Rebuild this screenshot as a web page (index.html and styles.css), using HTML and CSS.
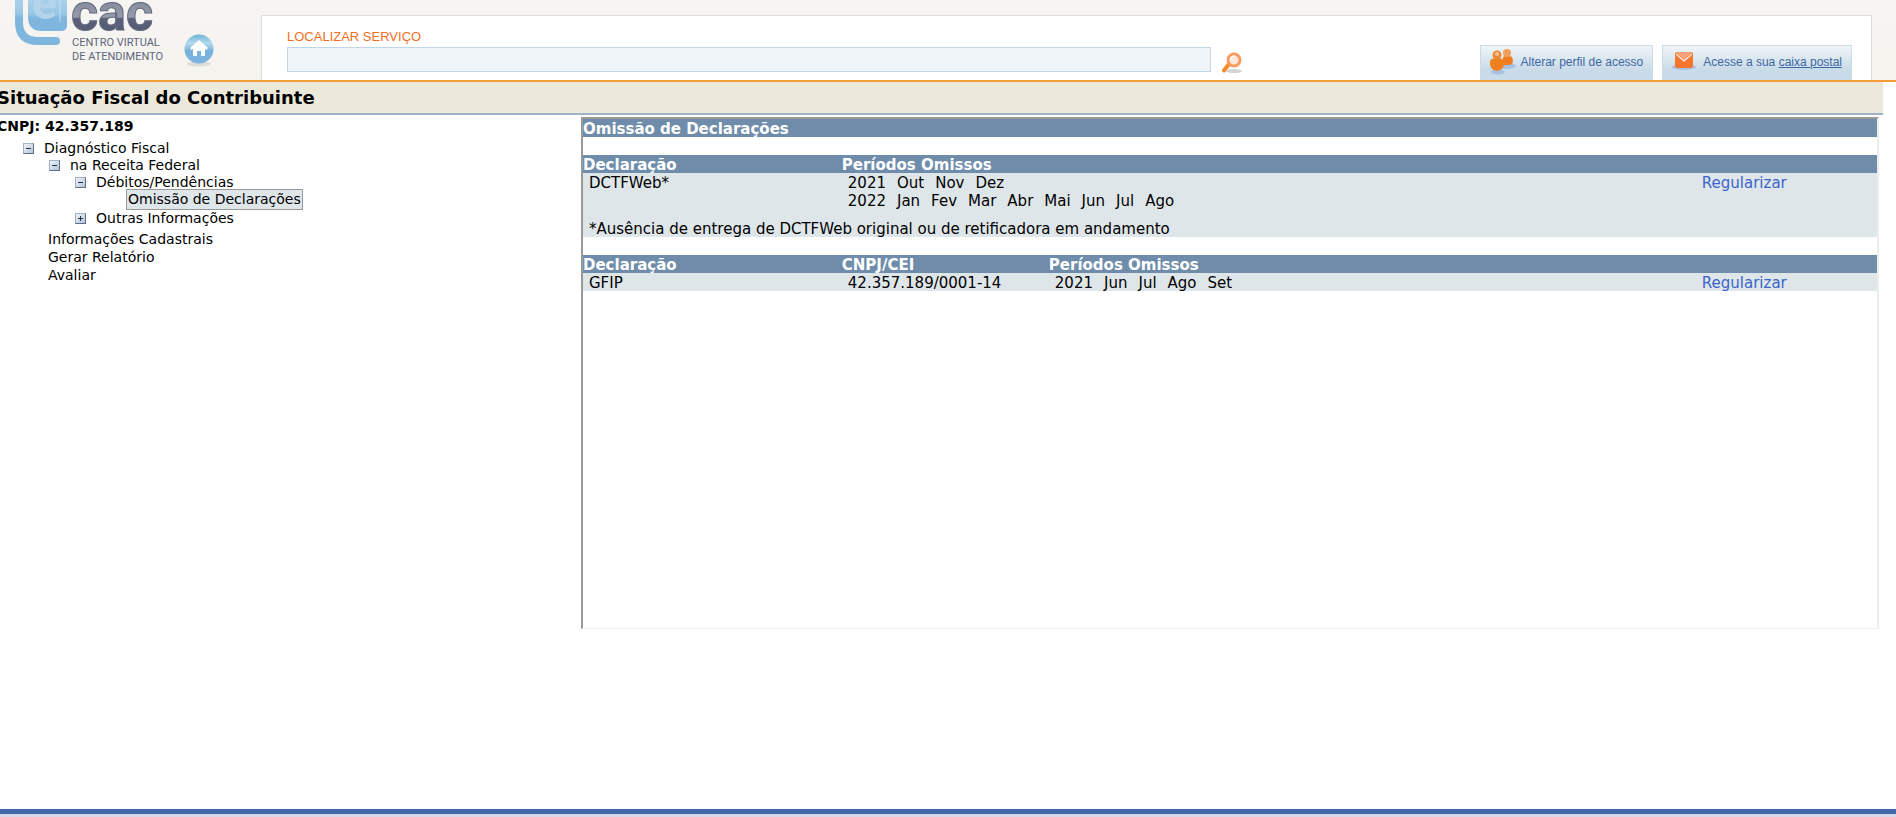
FILE: index.html
```html
<!DOCTYPE html>
<html lang="pt-BR">
<head>
  <meta charset="UTF-8">
  <meta name="viewport" content="width=device-width, initial-scale=1.0">
  <title>e-CAC - Situação Fiscal do Contribuinte</title>
  <link rel="stylesheet" href="styles.css">
</head>
<body>
  <header class="topo">
    <svg class="logo" width="170" height="66" viewBox="0 0 170 66" role="img" aria-label="eCAC">
      <defs>
        <linearGradient id="azul" gradientUnits="userSpaceOnUse" x1="0" y1="0" x2="0" y2="45">
          <stop offset="0" stop-color="#a9d0ea"/>
          <stop offset=".3" stop-color="#9ac7e6"/>
          <stop offset=".4" stop-color="#7fb6de"/>
          <stop offset="1" stop-color="#7fb6de"/>
        </linearGradient>
        <linearGradient id="cinza" gradientUnits="userSpaceOnUse" x1="0" y1="0" x2="0" y2="31">
          <stop offset="0" stop-color="#85899a"/>
          <stop offset=".55" stop-color="#979cab"/>
          <stop offset=".6" stop-color="#5a6178"/>
          <stop offset="1" stop-color="#545b73"/>
        </linearGradient>
      </defs>
      <path d="M19 -4V22Q19 41 38 41H56" fill="none" stroke="url(#azul)" stroke-width="8"/>
      <path d="M56 37Q60 37 60 41Q60 45 56 45Z" fill="#7fb6de"/>
      <path d="M28 -2H67V25Q67 31 61 31H42Q28 31 28 17Z" fill="url(#azul)"/>
      <path d="M60 -2V22" fill="none" stroke="#c3dff0" stroke-width="1"/>
      <text class="logo-e" x="32" y="19">e</text>
      <text class="logo-cac" x="71" y="30">cac</text>
      <text class="logo-nome" x="72" y="46">CENTRO VIRTUAL</text>
      <text class="logo-nome" x="72" y="60">DE ATENDIMENTO</text>
    </svg>
    <a class="inicio" href="#" aria-label="Página inicial">
      <svg width="30" height="33" viewBox="0 0 30 33">
        <defs>
          <linearGradient id="bola" x1="0" y1="0" x2="0" y2="1">
            <stop offset="0" stop-color="#6fb3d8"/>
            <stop offset=".3" stop-color="#b5dbee"/>
            <stop offset=".55" stop-color="#78b3dc"/>
            <stop offset="1" stop-color="#7db5e0"/>
          </linearGradient>
        </defs>
        <ellipse cx="15" cy="30" rx="12" ry="2.5" fill="#dcdcd9"/>
        <circle cx="15" cy="15" r="14.5" fill="url(#bola)"/>
        <path d="M15 6L24 14L22.5 16L21 15V22H17V17H13V22H9V15L7.500 16L6 14Z" fill="#fff"/>
      </svg>
    </a>
    <div class="painel">
      <form class="busca">
        <label for="servico">LOCALIZAR SERVIÇO</label>
        <div class="busca-linha">
          <input type="text" id="servico" name="servico">
          <button type="submit" aria-label="Localizar">
            <svg width="20" height="22" viewBox="0 0 20 22">
              <ellipse cx="12" cy="19" rx="8" ry="2" fill="#d4d4d4"/>
              <path d="M7 12L2 18.500" stroke="#f78a2c" stroke-width="4" stroke-linecap="round"/>
              <circle cx="12" cy="8" r="6" fill="#fde9dc" stroke="#fa9b5e" stroke-width="3"/>
              <path d="M8.500 7Q9.500 4 13 4" fill="none" stroke="#fff" stroke-width="1.500"/>
            </svg>
          </button>
        </div>
      </form>
      <nav class="abas">
        <a href="#">
          <svg width="28" height="26" viewBox="0 0 28 26">
            <ellipse cx="18" cy="17" rx="9" ry="3" fill="#a9c1e1"/>
            <ellipse cx="9" cy="23" rx="7" ry="2.500" fill="#a9c1e1"/>
            <path d="M14 8Q18 5 23 8Q26 15 20 16H14Z" fill="#ee7d24"/>
            <circle cx="18" cy="4" r="4" fill="#f3a05f"/>
            <path d="M1 12Q2 9 8 9Q14 9 15 12Q16 21 8 22Q0 21 1 12Z" fill="#f0801f"/>
            <circle cx="8" cy="6" r="4.500" fill="#ef8733"/>
            <circle cx="8" cy="5" r="2" fill="#f9c39a"/>
          </svg>
          <span>Alterar perfil de acesso</span>
        </a>
        <a href="#">
          <svg width="28" height="26" viewBox="0 0 28 26">
            <ellipse cx="13" cy="18" rx="12" ry="3" fill="#a9c1e1"/>
            <rect x="4" y="3" width="18" height="16" rx="2" fill="#f4752b"/>
            <path d="M5 3H21L13 11Z" fill="#f6a37c"/>
            <path d="M5 5L13 12L21 5" fill="none" stroke="#fde5d8" stroke-width="1.500"/>
          </svg>
          <span>Acesse a sua <u>caixa postal</u></span>
        </a>
      </nav>
    </div>
  </header>

  <h1 class="titulo">Situação Fiscal do Contribuinte</h1>

  <main class="conteudo">
    <aside class="menu">
      <p class="cnpj">CNPJ: 42.357.189</p>
      <ul class="arvore">
        <li><button type="button" aria-label="Recolher Diagnóstico Fiscal"></button><a href="#">Diagnóstico Fiscal</a>
          <ul>
            <li><button type="button" aria-label="Recolher na Receita Federal"></button><a href="#">na Receita Federal</a>
              <ul>
                <li><button type="button" aria-label="Recolher Débitos/Pendências"></button><a href="#">Débitos/Pendências</a>
                  <ul>
                    <li><a class="atual" href="#">Omissão de Declarações</a></li>
                  </ul>
                </li>
                <li><button type="button" class="fechado" aria-label="Expandir Outras Informações"></button><a href="#">Outras Informações</a></li>
              </ul>
            </li>
          </ul>
        </li>
      </ul>
      <ul class="links">
        <li><a href="#">Informações Cadastrais</a></li>
        <li><a href="#">Gerar Relatório</a></li>
        <li><a href="#">Avaliar</a></li>
      </ul>
    </aside>

    <section class="quadro">
      <h2>Omissão de Declarações</h2>
      <table>
        <colgroup><col class="c20"><col class="c66"><col class="c14"></colgroup>
        <thead>
          <tr><th>Declaração</th><th>Períodos Omissos</th><th></th></tr>
        </thead>
        <tbody>
          <tr>
            <td>DCTFWeb*</td>
            <td>
              <div class="meses"><span>2021</span><span>Out</span><span>Nov</span><span>Dez</span></div>
              <div class="meses"><span>2022</span><span>Jan</span><span>Fev</span><span>Mar</span><span>Abr</span><span>Mai</span><span>Jun</span><span>Jul</span><span>Ago</span></div>
            </td>
            <td><a href="#">Regularizar</a></td>
          </tr>
          <tr class="nota">
            <td colspan="3">*Ausência de entrega de DCTFWeb original ou de retificadora em andamento</td>
          </tr>
        </tbody>
      </table>
      <table>
        <colgroup><col class="c20"><col class="c16"><col class="c50"><col class="c14"></colgroup>
        <thead>
          <tr><th>Declaração</th><th>CNPJ/CEI</th><th>Períodos Omissos</th><th></th></tr>
        </thead>
        <tbody>
          <tr>
            <td>GFIP</td>
            <td>42.357.189/0001-14</td>
            <td><div class="meses"><span>2021</span><span>Jun</span><span>Jul</span><span>Ago</span><span>Set</span></div></td>
            <td><a href="#">Regularizar</a></td>
          </tr>
        </tbody>
      </table>
    </section>
  </main>

  <footer class="rodape"></footer>
</body>
</html>
```

FILE: styles.css
```css
* {
  box-sizing: border-box;
}
body {
  margin: 0;
  min-height: 100vh;
  display: flex;
  flex-direction: column;
  background: #fff;
  color: #000;
  font-family: Verdana, "DejaVu Sans", sans-serif;
  font-size: 14px;
  overflow-x: hidden;
}
a {
  color: inherit;
  text-decoration: none;
}
h1, h2, p, ul {
  margin: 0;
  padding: 0;
}
ul {
  list-style: none;
}
button {
  padding: 0;
  border: 0;
  background: none;
  cursor: pointer;
}
svg {
  display: block;
}

/* topo */
.topo {
  display: flex;
  height: 82px;
  padding-right: 24px;
  background: linear-gradient(#f6f5f2, #f4f3ee);
  border-bottom: 2px solid #f59c38;
  font-family: Arial, "Liberation Sans", sans-serif;
}
.logo {
  flex: none;
  margin-right: 14px;
}
.logo-e {
  font: bold 46px Roboto, sans-serif;
  fill: #b3d5eb;
}
.logo-cac {
  font: bold 52px Roboto, sans-serif;
  fill: url(#cinza);
  stroke: #626980;
  stroke-width: 1px;
}
.logo-nome {
  font: 11px Roboto, sans-serif;
  fill: #5f657a;
}
.inicio {
  margin: 34px 47px 0 0;
}
.painel {
  flex: 1;
  display: flex;
  justify-content: space-between;
  margin-top: 15px;
  padding: 0 19px 0 25px;
  background: #fff;
  border: 1px solid #dcdcda;
  border-bottom: 0;
}
.busca {
  flex: 0 1 955px;
  padding-top: 11px;
}
.busca label {
  display: block;
  line-height: 20px;
  font-size: 13px;
  color: #f26f21;
}
.busca-linha {
  display: flex;
  gap: 11px;
}
.busca input {
  flex: 1;
  height: 25px;
  border: 1px solid #c3d6e5;
  background: #f0f5fa;
}
.busca button {
  margin-top: 5px;
}
.abas {
  display: flex;
  align-items: flex-end;
  gap: 9px;
}
.abas a {
  display: flex;
  align-items: center;
  gap: 4px;
  height: 35px;
  padding: 0 9px 2px 8px;
  border: 1px solid #c8dbe8;
  border-bottom: 0;
  background: linear-gradient(#f0f5f8, #c9dbe8 70%);
  font-size: 12px;
  color: #3e67a5;
}

.titulo {
  height: 33px;
  margin: 0 13px 0 -3px;
  line-height: 31px;
  background: #ece9da;
  border-bottom: 2px solid #a0b2c8;
  font-size: 18px;
}

/* conteudo */
.conteudo {
  flex: 1;
  display: flex;
  align-items: flex-start;
  padding: 2px 17px 180px 0;
}
.menu {
  flex: 0 0 581px;
}
.cnpj {
  margin-left: -3px;
  padding-bottom: 5px;
  line-height: 18px;
  font-size: 14px;
  font-weight: bold;
}
.arvore {
  padding-left: 23px;
  line-height: 17px;
}
.arvore ul {
  padding-left: 26px;
}
.arvore button {
  width: 11px;
  height: 11px;
  margin-right: 10px;
  border: 1px solid #a3b1c6;
  border-right-color: #5c7190;
  border-bottom-color: #5c7190;
  background:
    linear-gradient(#22344f, #22344f) center / 5px 1px no-repeat,
    linear-gradient(135deg, #f0f4f9, #b5c3d6);
}
.arvore .fechado {
  background:
    linear-gradient(#22344f, #22344f) center / 5px 1px no-repeat,
    linear-gradient(#22344f, #22344f) center / 1px 5px no-repeat,
    linear-gradient(135deg, #f0f4f9, #b5c3d6);
}
.arvore .atual {
  display: inline-block;
  margin: -2px 0 0 25px;
  padding: 1px;
  border: 1px solid #999;
  background: #dfe6ea;
}
.links {
  padding: 3px 0 0 48px;
  line-height: 18px;
}

.quadro {
  flex: 1;
  min-height: 512px;
  border: 2px solid #999;
  border-right-color: #ededed;
  border-bottom: 1px solid #ededed;
  font-size: 15px;
  line-height: 16px;
}
.quadro h2,
.quadro th {
  padding: 2px 0 0;
  background: #6f8dab;
  color: #fff;
  font-size: 15px;
  text-align: left;
}
.quadro table {
  width: 100%;
  margin-top: 18px;
  table-layout: fixed;
  border-collapse: collapse;
}
.quadro td {
  padding: 2px 0 0 6px;
  background: #dfe6ea;
  vertical-align: top;
}
.quadro .nota td {
  padding-top: 12px;
}
.quadro td a {
  color: #3a63cb;
}
.meses {
  display: flex;
  gap: 11px;
}
.meses + .meses {
  padding-top: 2px;
}
.c14 { width: 14%; }
.c16 { width: 16%; }
.c20 { width: 20%; }
.c50 { width: 50%; }
.c66 { width: 66%; }

.rodape {
  height: 8px;
  background: #d5d6e8;
  border-top: 5px solid #4169aa;
}
```
